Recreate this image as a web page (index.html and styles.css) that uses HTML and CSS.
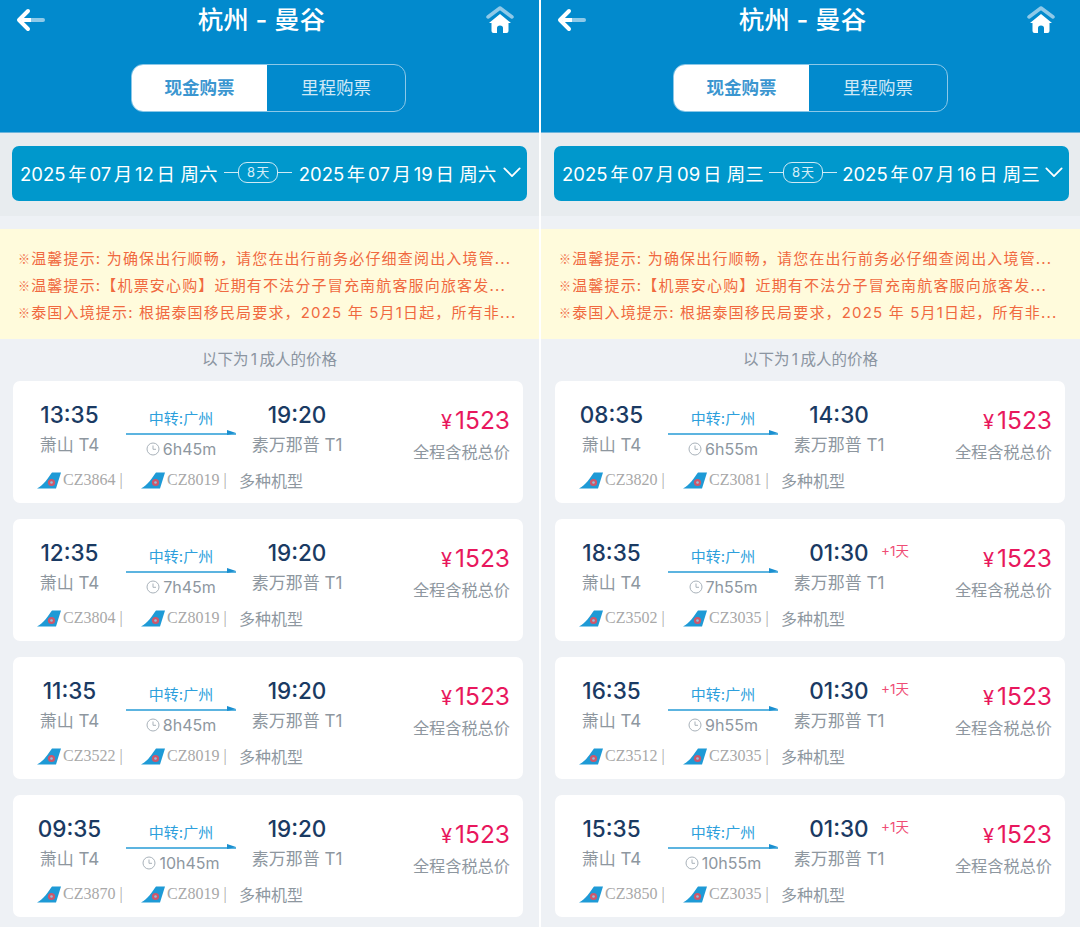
FILE: index.html
```html
<!DOCTYPE html>
<html lang="zh-CN">
<head>
    <meta charset="UTF-8">
    <title>杭州 - 曼谷</title>
    <link rel="stylesheet" href="styles.css">
</head>
<body>
    <svg class="defs" width="0" height="0">
        <symbol id="cz-logo" viewBox="0 0 24 17">
            <path d="M15 0.500 H24 L19 16.500 H0 C7 13 11 6 15 0.500 Z" fill="#1e9ad6"/>
            <circle cx="14.500" cy="10.500" r="3.600" fill="#d0566a"/>
            <circle cx="14.500" cy="10.500" r="1.300" fill="#8fc3dc"/>
        </symbol>
        <symbol id="clock" viewBox="0 0 14 14">
            <circle cx="7" cy="7" r="6" fill="none" stroke="#a9b2ba" stroke-width="1"/>
            <path d="M7 3.500 V7.300 H10" fill="none" stroke="#a9b2ba" stroke-width="1"/>
        </symbol>
        <symbol id="back" viewBox="0 0 30 24">
            <path d="M9 12 H27" stroke="#8fc9e8" stroke-width="4" stroke-linecap="round" fill="none"/>
            <path d="M12 3 L3 12 L12 21" stroke="#fff" stroke-width="4" stroke-linecap="round" stroke-linejoin="round" fill="none"/>
            <path d="M6 12 H15" stroke="#fff" stroke-width="4" fill="none"/>
        </symbol>
        <symbol id="home" viewBox="0 0 28 28">
            <path d="M2 11 L14 2 L26 11" stroke="#8fc9e8" stroke-width="3.500" stroke-linecap="round" stroke-linejoin="round" fill="none"/>
            <path d="M14 8 L25 17 L22.500 17 V25 Q22.500 27 20.500 27 H17 V22 Q17 19.500 14 19.500 Q11 19.500 11 22 V27 H7.500 Q5.500 27 5.500 25 V17 L3 17 Z" fill="#fff"/>
        </symbol>
        <symbol id="chevron" viewBox="0 0 20 12">
            <path d="M1.500 1.500 L10 10 L18.500 1.500" stroke="#fff" stroke-width="2" stroke-linecap="round" stroke-linejoin="round" fill="none"/>
        </symbol>
    </svg>

    <div class="screens">
        <section class="screen">
            <header class="top">
                <div class="nav">
                    <svg class="back"><use href="#back"/></svg>
                    <h1>杭州 - 曼谷</h1>
                    <svg class="home"><use href="#home"/></svg>
                </div>
                <div class="tabs">
                    <div class="tab active">现金购票</div>
                    <div class="tab">里程购票</div>
                </div>
            </header>
            <div class="date-wrap">
                <div class="date-bar">
                    <span>2025 年 07 月 12 日&nbsp; 周六</span>
                    <span class="days"><i>8 天</i></span>
                    <span>2025 年 07 月 19 日&nbsp; 周六</span>
                    <svg class="chevron"><use href="#chevron"/></svg>
                </div>
            </div>
            <div class="notice">
                <p><b>※</b>温馨提示: 为确保出行顺畅，请您在出行前务必仔细查阅出入境管...</p>
                <p><b>※</b>温馨提示:【机票安心购】近期有不法分子冒充南航客服向旅客发...</p>
                <p><b>※</b>泰国入境提示: 根据泰国移民局要求，2025 年 5月1日起，所有非...</p>
            </div>
            <div class="hint">以下为 1 成人的价格</div>
            <div class="cards">
                <article class="card">
                    <div class="row">
                        <div class="dep"><div class="time">13:35</div><div class="term">萧山 T4</div></div>
                        <div class="mid"><div class="via">中转:广州</div><div class="arrow"></div><div class="dur"><svg class="clock"><use href="#clock"/></svg>6h45m</div></div>
                        <div class="arr"><div class="time">19:20</div><div class="term">素万那普 T1</div></div>
                        <div class="price"><div class="amount"><small>¥</small>1523</div><div class="tax">全程含税总价</div></div>
                    </div>
                    <div class="flights">
                        <div class="fl"><svg class="logo"><use href="#cz-logo"/></svg>CZ3864 |</div>
                        <div class="fl"><svg class="logo"><use href="#cz-logo"/></svg>CZ8019 |</div>
                        <div class="model">多种机型</div>
                    </div>
                </article>
                <article class="card">
                    <div class="row">
                        <div class="dep"><div class="time">12:35</div><div class="term">萧山 T4</div></div>
                        <div class="mid"><div class="via">中转:广州</div><div class="arrow"></div><div class="dur"><svg class="clock"><use href="#clock"/></svg>7h45m</div></div>
                        <div class="arr"><div class="time">19:20</div><div class="term">素万那普 T1</div></div>
                        <div class="price"><div class="amount"><small>¥</small>1523</div><div class="tax">全程含税总价</div></div>
                    </div>
                    <div class="flights">
                        <div class="fl"><svg class="logo"><use href="#cz-logo"/></svg>CZ3804 |</div>
                        <div class="fl"><svg class="logo"><use href="#cz-logo"/></svg>CZ8019 |</div>
                        <div class="model">多种机型</div>
                    </div>
                </article>
                <article class="card">
                    <div class="row">
                        <div class="dep"><div class="time">11:35</div><div class="term">萧山 T4</div></div>
                        <div class="mid"><div class="via">中转:广州</div><div class="arrow"></div><div class="dur"><svg class="clock"><use href="#clock"/></svg>8h45m</div></div>
                        <div class="arr"><div class="time">19:20</div><div class="term">素万那普 T1</div></div>
                        <div class="price"><div class="amount"><small>¥</small>1523</div><div class="tax">全程含税总价</div></div>
                    </div>
                    <div class="flights">
                        <div class="fl"><svg class="logo"><use href="#cz-logo"/></svg>CZ3522 |</div>
                        <div class="fl"><svg class="logo"><use href="#cz-logo"/></svg>CZ8019 |</div>
                        <div class="model">多种机型</div>
                    </div>
                </article>
                <article class="card">
                    <div class="row">
                        <div class="dep"><div class="time">09:35</div><div class="term">萧山 T4</div></div>
                        <div class="mid"><div class="via">中转:广州</div><div class="arrow"></div><div class="dur"><svg class="clock"><use href="#clock"/></svg>10h45m</div></div>
                        <div class="arr"><div class="time">19:20</div><div class="term">素万那普 T1</div></div>
                        <div class="price"><div class="amount"><small>¥</small>1523</div><div class="tax">全程含税总价</div></div>
                    </div>
                    <div class="flights">
                        <div class="fl"><svg class="logo"><use href="#cz-logo"/></svg>CZ3870 |</div>
                        <div class="fl"><svg class="logo"><use href="#cz-logo"/></svg>CZ8019 |</div>
                        <div class="model">多种机型</div>
                    </div>
                </article>
            </div>
        </section>

        <section class="screen">
            <header class="top">
                <div class="nav">
                    <svg class="back"><use href="#back"/></svg>
                    <h1>杭州 - 曼谷</h1>
                    <svg class="home"><use href="#home"/></svg>
                </div>
                <div class="tabs">
                    <div class="tab active">现金购票</div>
                    <div class="tab">里程购票</div>
                </div>
            </header>
            <div class="date-wrap">
                <div class="date-bar">
                    <span>2025 年 07 月 09 日&nbsp; 周三</span>
                    <span class="days"><i>8 天</i></span>
                    <span>2025 年 07 月 16 日&nbsp; 周三</span>
                    <svg class="chevron"><use href="#chevron"/></svg>
                </div>
            </div>
            <div class="notice">
                <p><b>※</b>温馨提示: 为确保出行顺畅，请您在出行前务必仔细查阅出入境管...</p>
                <p><b>※</b>温馨提示:【机票安心购】近期有不法分子冒充南航客服向旅客发...</p>
                <p><b>※</b>泰国入境提示: 根据泰国移民局要求，2025 年 5月1日起，所有非...</p>
            </div>
            <div class="hint">以下为 1 成人的价格</div>
            <div class="cards">
                <article class="card">
                    <div class="row">
                        <div class="dep"><div class="time">08:35</div><div class="term">萧山 T4</div></div>
                        <div class="mid"><div class="via">中转:广州</div><div class="arrow"></div><div class="dur"><svg class="clock"><use href="#clock"/></svg>6h55m</div></div>
                        <div class="arr"><div class="time">14:30</div><div class="term">素万那普 T1</div></div>
                        <div class="price"><div class="amount"><small>¥</small>1523</div><div class="tax">全程含税总价</div></div>
                    </div>
                    <div class="flights">
                        <div class="fl"><svg class="logo"><use href="#cz-logo"/></svg>CZ3820 |</div>
                        <div class="fl"><svg class="logo"><use href="#cz-logo"/></svg>CZ3081 |</div>
                        <div class="model">多种机型</div>
                    </div>
                </article>
                <article class="card">
                    <div class="row">
                        <div class="dep"><div class="time">18:35</div><div class="term">萧山 T4</div></div>
                        <div class="mid"><div class="via">中转:广州</div><div class="arrow"></div><div class="dur"><svg class="clock"><use href="#clock"/></svg>7h55m</div></div>
                        <div class="arr"><div class="time">01:30<span class="plus">+1天</span></div><div class="term">素万那普 T1</div></div>
                        <div class="price"><div class="amount"><small>¥</small>1523</div><div class="tax">全程含税总价</div></div>
                    </div>
                    <div class="flights">
                        <div class="fl"><svg class="logo"><use href="#cz-logo"/></svg>CZ3502 |</div>
                        <div class="fl"><svg class="logo"><use href="#cz-logo"/></svg>CZ3035 |</div>
                        <div class="model">多种机型</div>
                    </div>
                </article>
                <article class="card">
                    <div class="row">
                        <div class="dep"><div class="time">16:35</div><div class="term">萧山 T4</div></div>
                        <div class="mid"><div class="via">中转:广州</div><div class="arrow"></div><div class="dur"><svg class="clock"><use href="#clock"/></svg>9h55m</div></div>
                        <div class="arr"><div class="time">01:30<span class="plus">+1天</span></div><div class="term">素万那普 T1</div></div>
                        <div class="price"><div class="amount"><small>¥</small>1523</div><div class="tax">全程含税总价</div></div>
                    </div>
                    <div class="flights">
                        <div class="fl"><svg class="logo"><use href="#cz-logo"/></svg>CZ3512 |</div>
                        <div class="fl"><svg class="logo"><use href="#cz-logo"/></svg>CZ3035 |</div>
                        <div class="model">多种机型</div>
                    </div>
                </article>
                <article class="card">
                    <div class="row">
                        <div class="dep"><div class="time">15:35</div><div class="term">萧山 T4</div></div>
                        <div class="mid"><div class="via">中转:广州</div><div class="arrow"></div><div class="dur"><svg class="clock"><use href="#clock"/></svg>10h55m</div></div>
                        <div class="arr"><div class="time">01:30<span class="plus">+1天</span></div><div class="term">素万那普 T1</div></div>
                        <div class="price"><div class="amount"><small>¥</small>1523</div><div class="tax">全程含税总价</div></div>
                    </div>
                    <div class="flights">
                        <div class="fl"><svg class="logo"><use href="#cz-logo"/></svg>CZ3850 |</div>
                        <div class="fl"><svg class="logo"><use href="#cz-logo"/></svg>CZ3035 |</div>
                        <div class="model">多种机型</div>
                    </div>
                </article>
            </div>
        </section>
    </div>
</body>
</html>
```

FILE: styles.css
```css
* { box-sizing: border-box; }
html, body { margin: 0; padding: 0; }
body {
    width: 1080px;
    height: 927px;
    overflow: hidden;
    background: #fff;
    font-family: Inter, "Noto Sans CJK SC", sans-serif;
}
.defs { position: absolute; }

.screens {
    display: grid;
    grid-template-columns: 539px 539px;
    column-gap: 2px;
    height: 927px;
}
.screen { background: #eef1f5; overflow: hidden; }

/* blue header */
.top {
    height: 133px;
    background: #028acd;
    border-bottom: 1px solid #6db5dc;
}
.nav {
    height: 40px;
    padding: 0 25px 0 16px;
    display: flex;
    align-items: center;
    justify-content: space-between;
}
.nav h1 {
    margin: -6px 0 0 -9px;
    font-size: 25.500px;
    font-weight: 500;
    color: #fff;
    white-space: nowrap;
}
.back { width: 30px; height: 24px; }
.home { width: 28px; height: 28px; }
.tabs {
    width: 275px;
    height: 48px;
    margin: 24px auto 0;
    display: flex;
    border: 1.5px solid #8cc8e8;
    border-radius: 12px;
    overflow: hidden;
}
.screen:first-child .tabs { margin-left: 131px; }
.tab {
    flex: 1;
    display: flex;
    align-items: center;
    justify-content: center;
    padding-bottom: 3px;
    font-size: 17.500px;
    color: #cfe8f6;
}
.tab.active {
    flex: 0 0 135px;
    background: #fff;
    color: #3b96d0;
    font-weight: 700;
}

/* date */
.date-wrap {
    height: 83px;
    padding: 13px 12px 0;
    background: #e8ecef;
}
.screen + .screen .date-wrap { padding: 13px 11px 0 13px; }
.date-bar {
    height: 55px;
    padding: 0 6px 2px 8px;
    display: flex;
    align-items: center;
    justify-content: space-between;
    background: #0098cc;
    border-radius: 7px;
    color: #fff;
    font-size: 18.500px;
    white-space: nowrap;
    word-spacing: -2.500px;
}
.days {
    flex: 0 0 68px;
    height: 1px;
    background: #cfeaf5;
    display: flex;
    align-items: center;
    justify-content: center;
}
.days i {
    width: 40px;
    height: 21px;
    line-height: 19px;
    border: 1px solid #cfeaf5;
    border-radius: 9px;
    background: #0098cc;
    text-align: center;
    font-style: normal;
    font-size: 13px;
    color: #d5eef8;
}
.chevron { width: 18px; height: 11px; }

/* notice */
.notice {
    height: 110px;
    margin-top: 13px;
    padding: 16px 18px 0;
    background: #fffbdc;
    color: #f0693f;
    font-size: 15px;
    letter-spacing: 1.170px;
}
.notice p {
    margin: 0;
    height: 27px;
    line-height: 27px;
    white-space: nowrap;
    overflow: hidden;
}
.notice b {
    font-family: "Noto Sans CJK SC", sans-serif;
    font-weight: 700;
    font-size: 12px;
}

.hint {
    height: 42px;
    line-height: 42px;
    text-align: center;
    font-size: 15.500px;
    color: #8b95a1;
    word-spacing: -2px;
}

/* flight cards */
.cards {
    display: flex;
    flex-direction: column;
    gap: 16px;
    padding: 0 16px 0 13px;
}
.screen + .screen .cards { padding: 0 15px 0 14px; }
.card {
    height: 122px;
    background: #fff;
    border-radius: 7px;
    display: flex;
    flex-direction: column;
}
.row {
    height: 88px;
    display: flex;
    padding-right: 13px;
}
.dep, .arr {
    text-align: center;
    padding-top: 20px;
    white-space: nowrap;
}
.dep { flex: 0 0 113px; }
.arr { flex: 0 0 122px; }
.time {
    position: relative;
    height: 28px;
    line-height: 28px;
    font-size: 22.500px;
    font-weight: 500;
    color: #1a3a63;
}
.term {
    margin-top: 4px;
    height: 24px;
    line-height: 24px;
    font-size: 17px;
    color: #8e979f;
}
.plus {
    position: absolute;
    left: 103px;
    top: -2px;
    font-size: 13.500px;
    font-weight: 400;
    color: #ef4d75;
    white-space: nowrap;
}
.mid {
    flex: 0 0 110px;
    padding-top: 28px;
    text-align: center;
}
.via {
    height: 20px;
    line-height: 20px;
    font-size: 15px;
    color: #2d9fdc;
}
.arrow {
    position: relative;
    height: 2px;
    margin-top: 4px;
    background: #5cb4e0;
}
.arrow::after {
    content: "";
    position: absolute;
    right: 0;
    top: -3px;
    border-left: 9px solid #1a8fd0;
    border-top: 3px solid transparent;
    border-bottom: 2px solid transparent;
}
.dur {
    margin-top: 3px;
    height: 22px;
    line-height: 22px;
    font-size: 16px;
    color: #8e979f;
    display: flex;
    align-items: center;
    justify-content: center;
    gap: 3px;
}
.clock { width: 14px; height: 14px; }
.price {
    flex: 1;
    padding-top: 24px;
    text-align: right;
    white-space: nowrap;
}
.amount {
    height: 30px;
    line-height: 30px;
    font-size: 24.500px;
    color: #e8175d;
}
.amount small { font-size: 20px; margin-right: 3px; }
.tax {
    margin-top: 6px;
    height: 22px;
    line-height: 22px;
    font-size: 16.200px;
    color: #8e979f;
}
.flights {
    height: 24px;
    margin-top: -1px;
    padding-left: 24px;
    display: grid;
    grid-template-columns: 104px 98px auto;
    align-items: center;
    font-size: 16px;
    color: #8e979f;
}
.fl {
    display: flex;
    align-items: center;
    gap: 2px;
    font-family: "Liberation Serif", serif;
    font-size: 16px;
    color: #a8a8a8;
    white-space: nowrap;
}
.logo { width: 24px; height: 17px; flex: none; }
.model { white-space: nowrap; }
```
